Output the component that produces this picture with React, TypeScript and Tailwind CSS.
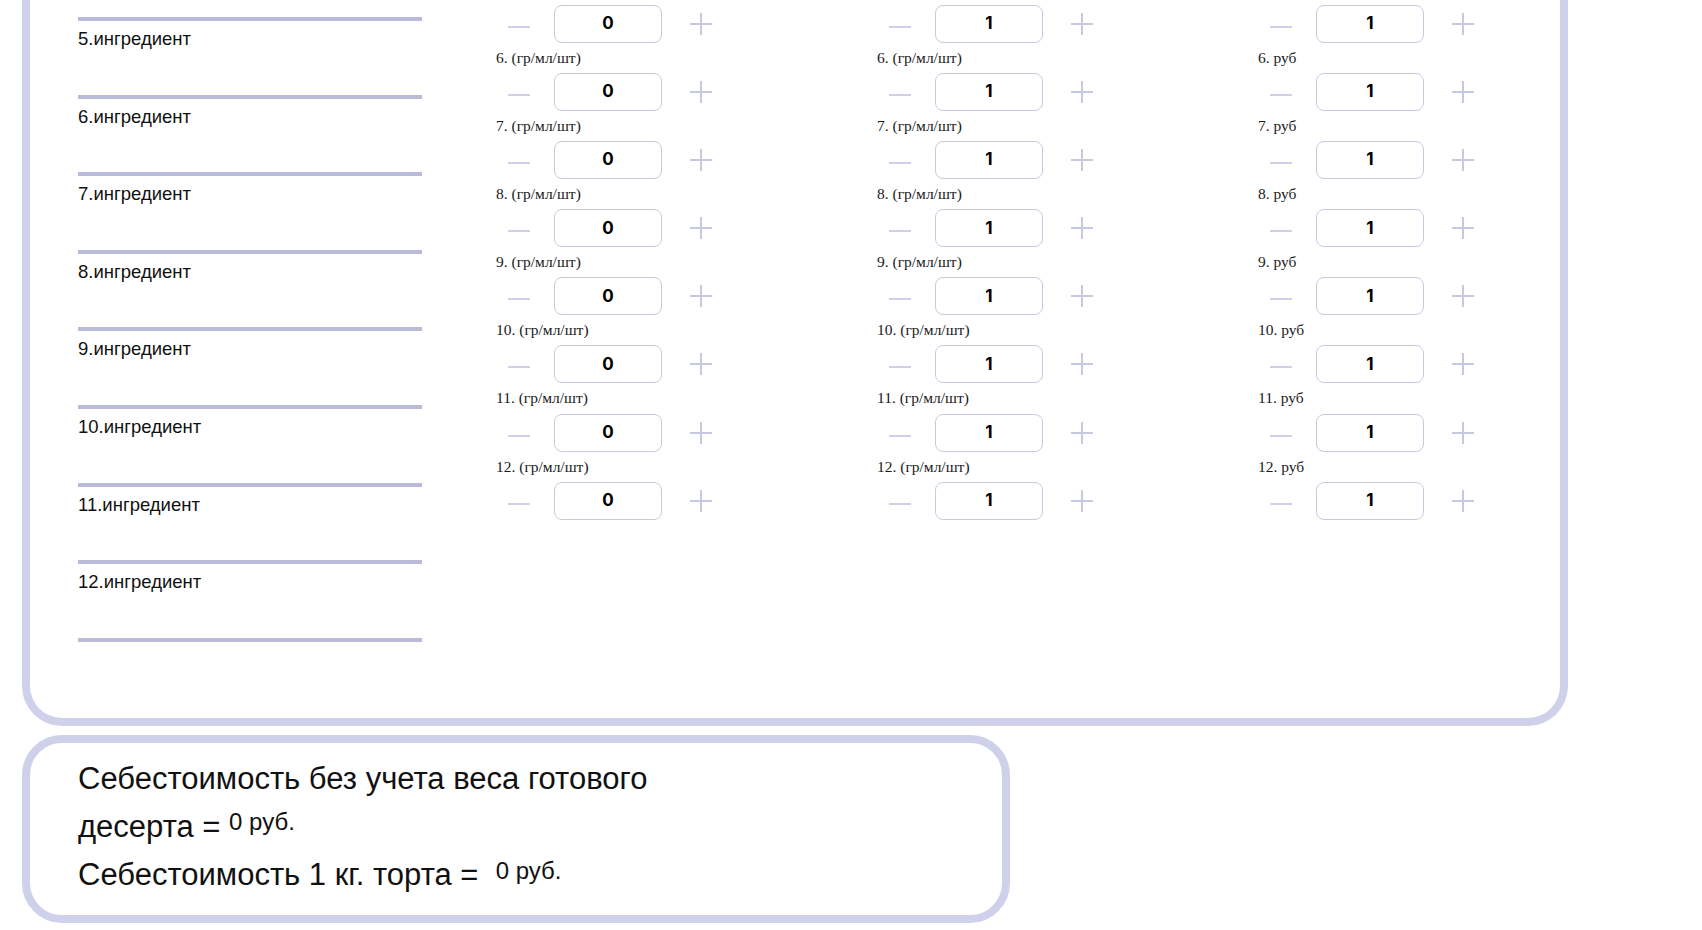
import React from 'react';

const ingredients = [5, 6, 7, 8, 9, 10, 11, 12];

function Minus() {
    return <div className="w-[22px] h-[2px] bg-[#cfd0e6] mt-[6px] shrink-0" />;
}

function Plus() {
    return (
        <svg width="24" height="24" viewBox="0 0 24 24" className="shrink-0">
            <line x1="12" y1="1" x2="12" y2="23" stroke="#c7c8e2" strokeWidth="2" />
            <line x1="1" y1="12" x2="23" y2="12" stroke="#c7c8e2" strokeWidth="2" />
        </svg>
    );
}

function Stepper({ value }: { value: string }) {
    return (
        <div className="flex items-center h-[38px] pl-[12px]">
            <Minus />
            <div className="ml-[24px] w-[108px] h-[38px] shrink-0 rounded-[8px] border border-[#c9cae2] flex items-center justify-center font-['Inter',sans-serif] font-bold text-[17px] text-black">
                {value}
            </div>
            <div className="ml-[27px]">
                <Plus />
            </div>
        </div>
    );
}

function StepperColumn({ unit, value, last }: { unit: (n: number) => string; value: string; last?: boolean }) {
    return (
        <div className={last ? 'w-[240px] shrink-0 pt-[5px] flex flex-col' : 'w-[381px] shrink-0 pt-[5px] flex flex-col'}>
            {ingredients.map((n, i) => (
                <div key={n}>
                    {i > 0 && (
                        <div className="h-[30.1px] pt-[7px] font-['Liberation_Serif',serif] text-[15.5px] leading-[16px] text-[#1a1a1a]">
                            {unit(n)}
                        </div>
                    )}
                    <Stepper value={value} />
                </div>
            ))}
        </div>
    );
}

export default function App() {
    return (
        <div className="bg-white h-screen overflow-hidden pl-[22px] font-['Liberation_Sans',sans-serif] text-black">
            <div className="w-[1546px] border-x-8 border-b-8 border-[#cfd0e9] rounded-b-[40px] flex">
                <div className="ml-[48px] w-[344px] shrink-0 pt-[17px] pb-[76px]">
                    <div className="h-[4px] bg-[#babbd8]" />
                    {ingredients.map((n) => (
                        <div key={n}>
                            <div className="pt-[8px] text-[18.5px] leading-[20px] text-[#111]">{n}.ингредиент</div>
                            <div className="h-[45.6px]" />
                            <div className="h-[4px] bg-[#babbd8]" />
                        </div>
                    ))}
                </div>
                <div className="ml-[74px] flex">
                    <StepperColumn unit={(n) => `${n}. (гр/мл/шт)`} value="0" />
                    <StepperColumn unit={(n) => `${n}. (гр/мл/шт)`} value="1" />
                    <StepperColumn unit={(n) => `${n}. руб`} value="1" last />
                </div>
            </div>
            <div className="mt-[9px] w-[988px] border-8 border-[#cfd0e9] rounded-[40px] pl-[48px] pt-[12px] pb-[16px] text-[31px] leading-[48px] text-[#111]">
                <div className="h-[48px]">Себестоимость без учета веса готового</div>
                <div className="h-[48px]">
                    десерта = <span className="text-[24px] leading-[24px] align-[7px]">0 руб.</span>
                </div>
                <div className="h-[48px]">
                    Себестоимость 1 кг. торта = &nbsp;<span className="text-[24px] leading-[24px] align-[6px]">0 руб.</span>
                </div>
            </div>
        </div>
    );
}
